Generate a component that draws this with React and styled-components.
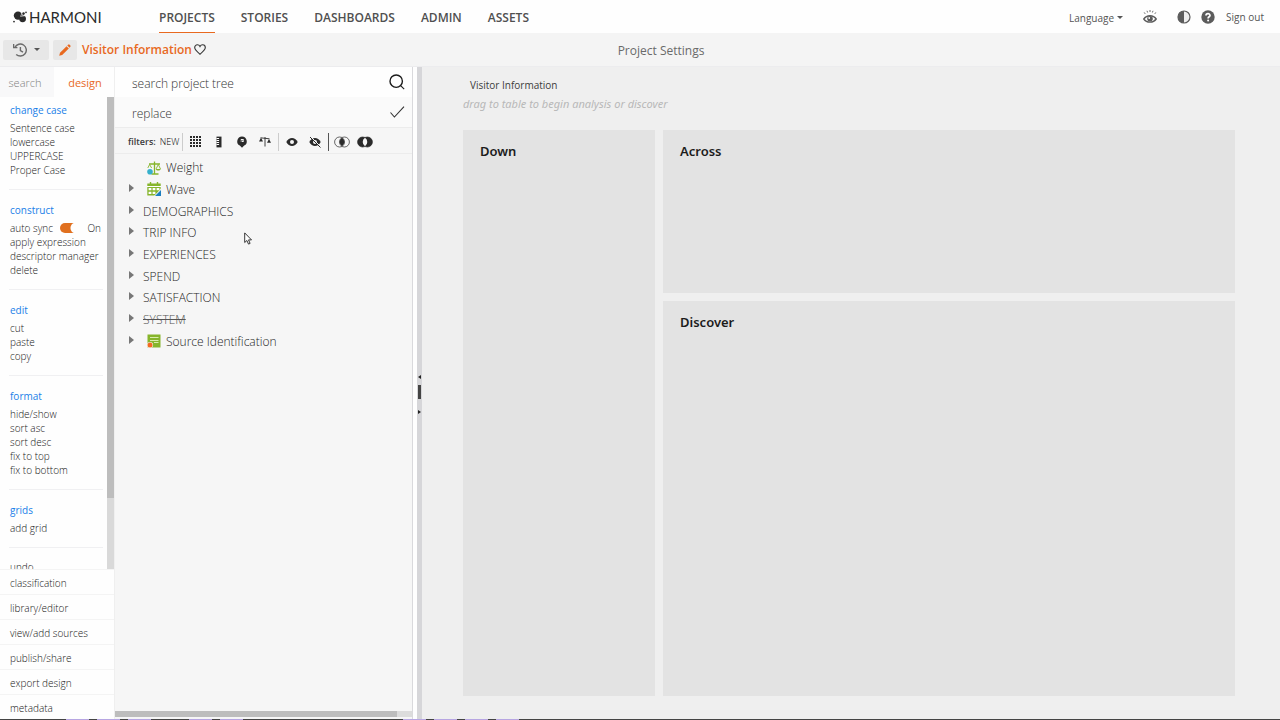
import { useState } from "react";
import styled, { createGlobalStyle } from "styled-components";

const GlobalStyle = createGlobalStyle`
  * {
    box-sizing: border-box;
  }
  body {
    margin: 0;
    font-family: "Open Sans", "Noto Sans", sans-serif;
    color: #3c3c3c;
    overflow: hidden;
  }
  button, input {
    font-family: inherit;
    font-weight: inherit;
    color: inherit;
  }
  ul {
    list-style: none;
    margin: 0;
    padding: 0;
  }
`;

const navItems = ["PROJECTS", "STORIES", "DASHBOARDS", "ADMIN", "ASSETS"];

const sections = [
  { title: "change case", items: ["Sentence case", "lowercase", "UPPERCASE", "Proper Case"] },
  { title: "construct", sync: true, items: ["apply expression", "descriptor manager", "delete"] },
  { title: "edit", items: ["cut", "paste", "copy"] },
  { title: "format", items: ["hide/show", "sort asc", "sort desc", "fix to top", "fix to bottom"] },
  { title: "grids", items: ["add grid"] },
];

const footerItems = [
  "classification",
  "library/editor",
  "view/add sources",
  "publish/share",
  "export design",
  "metadata",
];

const tree = [
  { name: "Weight", icon: "weight", leaf: true },
  { name: "Wave", icon: "wave" },
  { name: "DEMOGRAPHICS" },
  { name: "TRIP INFO" },
  { name: "EXPERIENCES" },
  { name: "SPEND" },
  { name: "SATISFACTION" },
  { name: "SYSTEM", hidden: true },
  { name: "Source Identification", icon: "source" },
];

function LogoMark() {
  return (
    <svg width="14" height="12" viewBox="0 0 14 12" fill="#2b2b2b">
      <circle cx="5" cy="4.6" r="4.2" />
      <circle cx="9.6" cy="7.8" r="3.4" />
      <circle cx="10.4" cy="2.6" r="1.4" />
      <circle cx="13" cy="1.4" r="0.8" />
      <circle cx="1" cy="10.6" r="0.9" />
      <path d="M9.4 1.2 7.6 5.4 12.6 4.6" stroke="#fff" strokeWidth="0.6" fill="none" />
    </svg>
  );
}

function HistoryIcon() {
  return (
    <svg width="14" height="14" viewBox="0 0 14 14" fill="none" stroke="#6a6a6a" strokeWidth="1.4">
      <path d="M2 4.2A6 6 0 1 1 3.2 11.4" />
      <path d="M0.6 1v3.6h3.8" />
      <path d="M7.4 4v3.6l2.6 1.6" />
    </svg>
  );
}

function PencilIcon() {
  return (
    <svg width="12" height="12" viewBox="0 0 12 12" fill="#e8691f">
      <path d="M0.2 11.8 1 8.8 7.6 2.2l2.2 2.2L3.2 11z" />
      <path d="M8.3 1.5 9.2.6a1 1 0 0 1 1.2 0l1 1a1 1 0 0 1 0 1.2l-.9.9z" />
    </svg>
  );
}

function HeartIcon() {
  return (
    <svg width="12" height="11" viewBox="0 0 12 11" fill="none" stroke="#333" strokeWidth="1.1">
      <path d="M6 10.2C3 7.8.7 6 .7 3.6.7 1.9 1.9.7 3.4.7 4.6.7 5.5 1.4 6 2.4 6.5 1.4 7.4.7 8.6.7c1.5 0 2.7 1.2 2.7 2.9C11.3 6 9 7.8 6 10.2z" />
    </svg>
  );
}

function InsightIcon() {
  return (
    <svg width="14" height="15" viewBox="0 0 14 15" fill="none" stroke="#5c5c5c">
      <path d="M1.2 3.4l1 1.5M4 1.8l.6 1.7M7 1v2M10 1.8l-.6 1.7M12.8 3.4l-1 1.5" strokeWidth="0.9" />
      <path d="M.8 10C3.6 5.6 10.4 5.6 13.2 10 10.4 14.2 3.6 14.2.8 10z" strokeWidth="1.4" />
      <circle cx="7" cy="9.8" r="2.8" fill="#5c5c5c" stroke="none" />
      <circle cx="6.2" cy="9" r="0.9" fill="#fff" stroke="none" />
    </svg>
  );
}

function ContrastIcon() {
  return (
    <svg width="14" height="14" viewBox="0 0 14 14">
      <circle cx="7" cy="7" r="6" fill="#eee" stroke="#5c5c5c" strokeWidth="1.2" />
      <path d="M7 1a6 6 0 0 0 0 12z" fill="#5c5c5c" />
    </svg>
  );
}

function HelpIcon() {
  return (
    <svg width="14" height="14" viewBox="0 0 14 14">
      <circle cx="7" cy="7" r="6.7" fill="#5c5c5c" />
      <path d="M5 5.5C5 3 9 3 9 5.4 9 6.8 7.1 6.8 7.1 8.4" fill="none" stroke="#fff" strokeWidth="1.7" />
      <circle cx="7.1" cy="10.5" r="1" fill="#fff" />
    </svg>
  );
}

function SearchIcon() {
  return (
    <svg width="16" height="16" viewBox="0 0 16 16" fill="none" stroke="#1c1c1c">
      <circle cx="7.2" cy="7.2" r="6.2" strokeWidth="1.4" />
      <path d="M11.6 11.6l3.6 3.6" strokeWidth="1.1" />
    </svg>
  );
}

function CheckIcon() {
  return (
    <svg width="16" height="14" viewBox="0 0 16 14" fill="none" stroke="#333" strokeWidth="1.1">
      <path d="M1.5 7.5 5.4 12 15 1.6" />
    </svg>
  );
}

const dots = [0, 1, 2, 3];

function GridIcon() {
  return (
    <svg width="12" height="12" viewBox="0 0 12 12" fill="#2b2b2b">
      {dots.map((r) => dots.map((c) => <rect key={`${r}${c}`} x={c * 3} y={r * 3} width="2" height="2" />))}
    </svg>
  );
}

function RulerIcon() {
  return (
    <svg width="12" height="12" viewBox="0 0 12 12">
      <path d="M3.5.6h5v10.8h-5z" fill="#2b2b2b" />
      <path d="M3.5 2.5h2.6M3.5 4.5h2.6M3.5 6.5h2.6M3.5 8.5h2.6" stroke="#fff" strokeWidth="1" />
    </svg>
  );
}

function PinIcon() {
  return (
    <svg width="12" height="12" viewBox="0 0 12 12">
      <path d="M6 .4a4.9 4.9 0 0 1 2.2 9.2L6 11.8 3.8 9.6A4.9 4.9 0 0 1 6 .4z" fill="#2b2b2b" />
      <path d="M4.8 3h2.9v3H4.8z" fill="#f4f4f4" />
      <path d="M5.3 4h.6v2h-.6zM6.5 4h.6v1h-.6z" fill="#2b2b2b" />
    </svg>
  );
}

function ScaleIcon() {
  return (
    <svg width="12" height="12" viewBox="0 0 12 12" fill="#2b2b2b">
      <path d="M6 1v9.5M1.5 1.8l9 1" stroke="#2b2b2b" strokeWidth="0.9" />
      <path d="M0 5.6 2 1.8l2 3.8zM8 6.8l2-3.8 2 3.8z" />
    </svg>
  );
}

function EyeIcon({ off }) {
  return (
    <svg width="12" height="12" viewBox="0 0 12 12">
      <path d="M.3 6C3 .8 9 .8 11.7 6 9 11.2 3 11.2.3 6z" fill="#2b2b2b" />
      <circle cx="6" cy="6" r="2" fill="#f6f6f6" />
      {off && <path d="M1.8.8 12 11" stroke="#f6f6f6" strokeWidth="1" />}
      {off && <path d="M1 1 11.5 11.5" stroke="#2b2b2b" strokeWidth="1" />}
    </svg>
  );
}

function VennIcon({ outer }) {
  return (
    <svg width="16" height="12" viewBox="0 0 16 12">
      <circle cx="5.6" cy="6" r="5" fill={outer ? "#2b2b2b" : "none"} stroke="#2b2b2b" strokeWidth="0.7" />
      <circle cx="10.4" cy="6" r="5" fill={outer ? "#2b2b2b" : "none"} stroke="#2b2b2b" strokeWidth="0.7" />
      <path d="M8 1.8a5 5 0 0 1 0 8.4 5 5 0 0 1 0-8.4z" fill={outer ? "#f6f6f6" : "#2b2b2b"} />
    </svg>
  );
}

function TreeIcon({ type }) {
  if (type === "weight") {
    return (
      <svg width="14" height="14" viewBox="0 0 14 14">
        <path d="M7.5.5v12M2 3h11M4.5 13h7" stroke="#86b52b" strokeWidth="1.3" />
        <path d="M.8 7 2.6 3.5 4.6 7M9 8l2.3-4.5L13.5 8" fill="none" stroke="#86b52b" strokeWidth="0.9" />
        <path d="M8.8 8h4.900c-.5 2-4.400 2-4.900 0z" fill="#86b52b" />
        <circle cx="3" cy="10.8" r="2.8" fill="#35b0cc" />
      </svg>
    );
  }
  if (type === "wave") {
    return (
      <svg width="14" height="14" viewBox="0 0 14 14">
        <path d="M.3 1.5h13.4v12H.3z" fill="#86b52b" />
        <path d="M3.5 0v2.5M10.5 0v2.5" stroke="#86b52b" strokeWidth="1.4" />
        <path d="M1.6 6h2.8v2.2H1.6zM5.6 6h2.8v2.2H5.6zM9.6 6h2.8v2.2H9.6zM1.6 9.8h2.8V12H1.6zM5.6 9.8h2.8V12H5.6z" fill="#fff" />
        <path d="M0 4.5h14" stroke="#fff" strokeWidth="1" />
        <path d="M14 6.5V14H7z" fill="#f6f6f6" />
        <path d="M14 8v6H8z" fill="#1c7fc0" />
      </svg>
    );
  }
  return (
    <svg width="14" height="14" viewBox="0 0 14 14">
      <path d="M.5.5h13v13H.5z" fill="#86b52b" />
      <path d="M3 3.5h8.5M3 6.5h8.5M7 8.5h4.5" stroke="#d9ecae" strokeWidth="1" />
      <circle cx="3" cy="11" r="3.1" fill="#f6f6f6" />
      <circle cx="3" cy="11" r="2.5" fill="#f26a21" />
    </svg>
  );
}

const filterGroups = [
  [
    { label: "Categorical", icon: <GridIcon /> },
    { label: "Numeric", icon: <RulerIcon /> },
    { label: "Location", icon: <PinIcon /> },
    { label: "Weights", icon: <ScaleIcon /> },
  ],
  [
    { label: "Visible", icon: <EyeIcon /> },
    { label: "Hidden", icon: <EyeIcon off /> },
  ],
  [
    { label: "Intersect", icon: <VennIcon /> },
    { label: "Exclude", icon: <VennIcon outer /> },
  ],
];

export default function App() {
  const [sync, setSync] = useState(true);
  const [query, setQuery] = useState("");
  const [replace, setReplace] = useState("");

  return (
    <Page>
      <GlobalStyle />
      <Header>
        <Logo href="#">
          <LogoMark />
          HARMONI
        </Logo>
        <Nav>
          {navItems.map((item, i) => (
            <NavLink key={item} href="#" $active={i === 0}>
              {item}
            </NavLink>
          ))}
        </Nav>
        <Account>
          <LanguageButton>
            Language <Caret />
          </LanguageButton>
          <IconButton aria-label="Insights">
            <InsightIcon />
          </IconButton>
          <IconPair>
            <IconButton aria-label="Contrast">
              <ContrastIcon />
            </IconButton>
            <IconButton aria-label="Help">
              <HelpIcon />
            </IconButton>
          </IconPair>
          <SignOut href="#">Sign out</SignOut>
        </Account>
      </Header>

      <Toolbar>
        <ToolGroup>
          <ToolButton $wide aria-label="History">
            <HistoryIcon />
            <Caret />
          </ToolButton>
          <ToolButton aria-label="Edit">
            <PencilIcon />
          </ToolButton>
          <ProjectName>Visitor Information</ProjectName>
          <IconButton aria-label="Favourite">
            <HeartIcon />
          </IconButton>
        </ToolGroup>
        <SettingsTitle>Project Settings</SettingsTitle>
      </Toolbar>

      <Body>
        <Sidebar>
          <Tabs>
            <Tab>search</Tab>
            <Tab $active>design</Tab>
          </Tabs>
          <ScrollArea>
            <Sections>
              {sections.map((section) => (
                <Section key={section.title}>
                  <SectionTitle>{section.title}</SectionTitle>
                  <ul>
                    {section.sync && (
                      <SyncRow>
                        <label htmlFor="sync">auto sync</label>
                        <Toggle
                          id="sync"
                          type="checkbox"
                          checked={sync}
                          onChange={(e) => setSync(e.target.checked)}
                        />
                        <span>{sync ? "On" : "Off"}</span>
                      </SyncRow>
                    )}
                    {section.items.map((item) => (
                      <li key={item}>
                        <Command>{item}</Command>
                      </li>
                    ))}
                  </ul>
                </Section>
              ))}
              <Section>
                <Command>undo</Command>
              </Section>
            </Sections>
            <ScrollTrack>
              <ScrollThumb />
            </ScrollTrack>
          </ScrollArea>
          <FooterList>
            {footerItems.map((item) => (
              <li key={item}>
                <FooterButton>{item}</FooterButton>
              </li>
            ))}
          </FooterList>
        </Sidebar>

        <TreePanel>
          <SearchRow>
            <SearchInput
              aria-label="search project tree"
              placeholder="search project tree"
              value={query}
              onChange={(e) => setQuery(e.target.value)}
            />
            <IconButton aria-label="Search">
              <SearchIcon />
            </IconButton>
          </SearchRow>
          <SearchRow $muted>
            <SearchInput
              aria-label="replace"
              placeholder="replace"
              value={replace}
              onChange={(e) => setReplace(e.target.value)}
            />
            <IconButton aria-label="Apply replace">
              <CheckIcon />
            </IconButton>
          </SearchRow>
          <Filters>
            <FilterLabel>filters:</FilterLabel>
            <NewButton>NEW</NewButton>
            {filterGroups.map((group, i) => (
              <FilterGroup key={i} $last={i === 2}>
                {group.map((filter) => (
                  <IconButton key={filter.label} aria-label={filter.label}>
                    {filter.icon}
                  </IconButton>
                ))}
              </FilterGroup>
            ))}
          </Filters>
          <Tree>
            {tree.map((node) => (
              <TreeRow key={node.name}>
                <Expander $leaf={node.leaf} aria-label={`Expand ${node.name}`} />
                <TreeLabel $hasIcon={!!node.icon} $struck={node.hidden}>
                  {node.icon && <TreeIcon type={node.icon} />}
                  {node.name}
                </TreeLabel>
              </TreeRow>
            ))}
          </Tree>
          <HorizontalTrack>
            <HorizontalThumb />
          </HorizontalTrack>
          <Pointer width="9" height="13" viewBox="0 0 9 13">
            <path d="M.7.9v9.6l2.2-2 1.6 3.6 1.6-.7-1.6-3.5h3z" fill="#fff" stroke="#222" strokeWidth="0.9" />
          </Pointer>
        </TreePanel>

        <Splitter>
          <SplitArrow $left />
          <SplitGrip />
          <SplitArrow />
        </Splitter>

        <Workspace>
          <WorkspaceTitle>Visitor Information</WorkspaceTitle>
          <Hint>drag to table to begin analysis or discover</Hint>
          <DropGrid>
            <DropZone $tall>Down</DropZone>
            <DropZone>Across</DropZone>
            <DropZone>Discover</DropZone>
          </DropGrid>
        </Workspace>
      </Body>
      <BottomStrip />
    </Page>
  );
}

const Page = styled.div`
  display: flex;
  flex-direction: column;
  height: 100vh;
  background: #fefefe;
`;

const Header = styled.header`
  display: flex;
  align-items: center;
  height: 33px;
  padding: 0 16px 0 13px;
  background: #fefefe;
`;

const Logo = styled.a`
  display: flex;
  align-items: center;
  gap: 2px;
  width: 146px;
  font-family: Lato, sans-serif;
  font-size: 15px;
  line-height: 20px;
  color: #2b2b2b;
  text-decoration: none;
`;

const Nav = styled.nav`
  display: flex;
  gap: 26px;
  flex: 1;
  height: 100%;
`;

const NavLink = styled.a`
  display: flex;
  align-items: center;
  padding-top: 2px;
  font-size: 12px;
  font-weight: 600;
  color: #505050;
  text-decoration: none;
  border-bottom: 1px solid ${(p) => (p.$active ? "#e8691f" : "transparent")};
`;

const Account = styled.div`
  display: flex;
  align-items: center;
  gap: 20px;
  font-size: 10px;
  font-weight: 500;
  color: #555;
`;

const IconButton = styled.button`
  display: flex;
  align-items: center;
  justify-content: center;
  padding: 0;
  border: none;
  background: none;
`;

const LanguageButton = styled(IconButton)`
  gap: 3px;
  padding-top: 2px;
  font-size: 10px;
`;

const Caret = styled.span`
  border: 3px solid transparent;
  border-top-color: #555;
  border-bottom: none;
`;

const IconPair = styled.div`
  display: flex;
  gap: 10px;
`;

const SignOut = styled.a`
  margin-left: -9px;
  color: inherit;
  text-decoration: none;
`;

const Toolbar = styled.div`
  display: grid;
  grid-template-columns: 1fr auto 1fr;
  align-items: center;
  height: 34px;
  padding-left: 42px;
  background: #f4f4f4;
  border-bottom: 1px solid #ececee;
`;

const ToolGroup = styled.div`
  display: flex;
  align-items: center;
  margin-left: -39px;
`;

const ToolButton = styled.button`
  display: flex;
  align-items: center;
  justify-content: center;
  gap: 7px;
  width: ${(p) => (p.$wide ? "46px" : "24px")};
  height: 20px;
  margin-right: ${(p) => (p.$wide ? "4px" : "5px")};
  padding: 0;
  border: none;
  border-radius: 2px;
  background: #e7e7e7;
`;

const ProjectName = styled.h1`
  margin: 0 2px 0 0;
  font-size: 12px;
  font-weight: 600;
  color: #e8691f;
`;

const SettingsTitle = styled.h2`
  margin: 0;
  padding-top: 1px;
  font-size: 12px;
  font-weight: 500;
  color: #6a6a6a;
`;

const Body = styled.div`
  display: flex;
  flex: 1;
  min-height: 0;
`;

const Sidebar = styled.aside`
  display: flex;
  flex-direction: column;
  width: 115px;
  border-right: 1px solid #efefef;
  background: #fefefe;
  font-weight: 300;
  color: #161616;
`;

const Tabs = styled.div`
  display: grid;
  grid-template-columns: 54px 1fr;
  height: 30px;
`;

const Tab = styled.button`
  padding: ${(p) => (p.$active ? "0 0 0 2px" : "0 4px 0 0")};
  border: none;
  background: ${(p) => (p.$active ? "#fefefe" : "#f8f8f9")};
  font-size: 11px;
  font-weight: ${(p) => (p.$active ? 400 : 300)};
  color: ${(p) => (p.$active ? "#e8691f" : "#808080")};
`;

const ScrollArea = styled.div`
  display: flex;
  flex: 1;
  min-height: 0;
`;

const Sections = styled.div`
  flex: 1;
  padding: 0 4px 0 9px;
  overflow: hidden;
  font-size: 10px;
  line-height: 14px;
`;

const Section = styled.section`
  padding: 12px 0;
  border-bottom: 1px solid #f0f0f2;

  &:first-child {
    padding-top: 5px;
  }
`;

const SectionTitle = styled.h3`
  margin: 0 0 3px;
  padding-left: 1px;
  font-size: 10px;
  font-weight: 400;
  line-height: 16px;
  color: #1a7fe8;
`;

const Command = styled.button`
  display: block;
  padding: 0 1px;
  border: none;
  background: none;
  font-size: 10px;
  line-height: 14px;
  white-space: nowrap;
`;

const SyncRow = styled.li`
  display: flex;
  align-items: center;
  height: 14px;
  padding: 0 2px 0 1px;

  span {
    margin-left: auto;
  }
`;

const Toggle = styled.input`
  appearance: none;
  width: 20px;
  height: 10px;
  margin: 0 0 0 7px;
  border-radius: 5px;
  background: ${(p) =>
    p.checked
      ? "radial-gradient(circle at 16px 5px, #fefefe 5px, #e0701f 6px)"
      : "radial-gradient(circle at 4px 5px, #fefefe 5px, #bbb 6px)"};
`;

const ScrollTrack = styled.div`
  width: 7px;
  background: #d9d9d9;
`;

const ScrollThumb = styled.div`
  height: 85%;
  background: #bdbdbd;
`;

const FooterList = styled.ul`
  li {
    height: 25px;
    border-top: 1px solid #f4f4f4;
  }
`;

const FooterButton = styled(Command)`
  padding: 6px 10px 4px;
`;

const TreePanel = styled.section`
  position: relative;
  display: flex;
  flex-direction: column;
  width: 298px;
  border-right: 1px solid #d9d9dc;
  background: #f6f6f6;
  font-weight: 300;
`;

const SearchRow = styled.div`
  display: flex;
  align-items: center;
  height: 30px;
  padding: 0 7px 0 17px;
  background: ${(p) => (p.$muted ? "#fafafa" : "#fefefe")};
`;

const SearchInput = styled.input`
  flex: 1;
  min-width: 0;
  padding: 2px 0 0;
  border: none;
  outline: none;
  background: none;
  font-size: 12px;

  &::placeholder {
    color: #333;
    opacity: 1;
  }
`;

const Filters = styled.div`
  display: flex;
  align-items: center;
  height: 27px;
  padding: 2px 0 0 13px;
  border: 1px solid #ececec;
  border-width: 1px 0;
`;

const FilterLabel = styled.span`
  margin-right: 4px;
  font-size: 9px;
  font-weight: 600;
`;

const NewButton = styled(IconButton)`
  margin-right: 3px;
  font-size: 9px;
  color: #000;
`;

const FilterGroup = styled.div`
  display: flex;
  align-items: center;
  gap: ${(p) => (p.$last ? "7px" : "11px")};
  height: 18px;
  padding: ${(p) => (p.$last ? "0 5px" : "0 7px")};
  border-left: 1px solid ${(p) => (p.$last ? "#555" : "#ccc")};
`;

const Tree = styled.ul`
  display: grid;
  grid-auto-rows: 1fr;
  height: 195px;
  margin-top: 3px;
`;

const TreeRow = styled.li`
  display: flex;
  align-items: center;
  padding-left: 14px;
`;

const Expander = styled.button`
  width: 5px;
  height: 8px;
  margin: 0 9px 3px 0;
  padding: 0;
  border: solid transparent;
  border-width: 4px 0 4px 5px;
  border-left-color: #777;
  background: none;
  visibility: ${(p) => (p.$leaf ? "hidden" : "visible")};
`;

const TreeLabel = styled.span`
  display: flex;
  align-items: center;
  gap: 5px;
  padding-left: ${(p) => (p.$hasIcon ? "4px" : "0")};
  font-size: 12px;
  color: ${(p) => (p.$struck ? "#555" : "#1e1e1e")};
  text-decoration: ${(p) => (p.$struck ? "line-through" : "none")};
`;

const HorizontalTrack = styled.div`
  height: 6px;
  margin: auto 0 2px;
  background: #dcdcdc;
`;

const HorizontalThumb = styled.div`
  width: 95%;
  height: 100%;
  background: #bdbdbd;
`;

const Pointer = styled.svg`
  position: absolute;
  left: 129px;
  top: 165px;
  pointer-events: none;
`;

const Splitter = styled.div`
  display: flex;
  flex-direction: column;
  align-items: center;
  justify-content: center;
  gap: 6px;
  width: 5px;
  margin-left: 4px;
  padding-top: 3px;
  background: #d6d6d9;
`;

const SplitArrow = styled.span`
  border: solid transparent;
  border-width: ${(p) => (p.$left ? "2px 3px 2px 0" : "2px 0 2px 3px")};
  border-left-color: #222;
  border-right-color: #222;
`;

const SplitGrip = styled.span`
  width: 3px;
  height: 14px;
  margin-bottom: 5px;
  background: #444;
`;

const Workspace = styled.main`
  display: flex;
  flex-direction: column;
  flex: 1;
  padding: 10px 45px 23px 41px;
  background: #efefef;
`;

const WorkspaceTitle = styled.h2`
  margin: 0 0 0 7px;
  font-size: 10px;
  font-weight: 400;
  line-height: 16px;
`;

const Hint = styled.p`
  margin: 2px 0 17px;
  font-family: "Noto Sans", sans-serif;
  font-size: 11px;
  font-style: italic;
  line-height: 18px;
  color: #b8b8b8;
`;

const DropGrid = styled.div`
  display: grid;
  grid-template: 7fr 17fr / 192px 1fr;
  gap: 8px;
  flex: 1;
`;

const DropZone = styled.section`
  grid-row: ${(p) => (p.$tall ? "1 / 3" : "auto")};
  padding: 12px 17px;
  background: #e3e3e3;
  font-family: "Noto Sans", sans-serif;
  font-size: 13px;
  font-weight: 600;
  line-height: 18px;
  color: #1c1c1c;
`;

const BottomStrip = styled.footer`
  height: 1px;
  background:
    repeating-linear-gradient(90deg, #b7a6e2 0 23px, #444 23px 31px) 66px 0 / 86px 1px no-repeat,
    repeating-linear-gradient(90deg, #b7a6e2 0 23px, #444 23px 31px) 189px 0 / 54px 1px no-repeat,
    repeating-linear-gradient(90deg, #b7a6e2 0 23px, #444 23px 31px) 403px 0 / 116px 1px no-repeat,
    #444;
`;
